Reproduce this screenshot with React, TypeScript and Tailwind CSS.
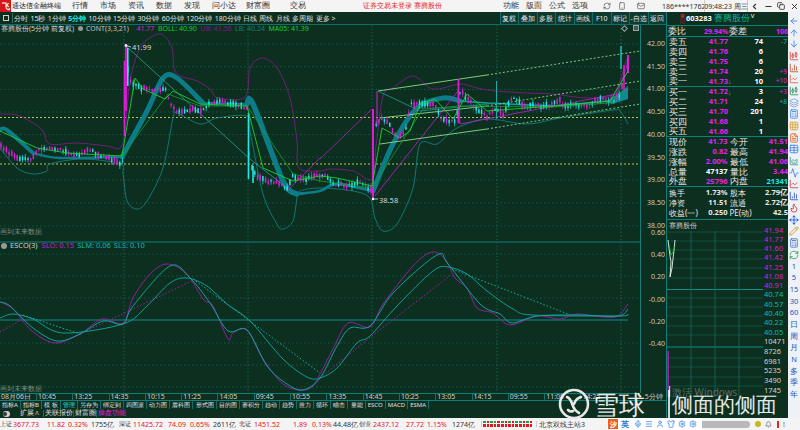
import React from "react";
import { ArrowLeft, ArrowUp, ArrowDown, CandlestickChart, BarChart3, LineChart, Layers, Grid3x3, FileText, Table, Activity, AreaChart, Flame, Move, Pencil, Calculator, RefreshCw, Bell, Smartphone, Mail, Minus, Copy, X, ChevronLeft, Menu, User, Shirt, Settings, Mic } from "lucide-react";

type P = [number, number];
const poly = (p: P[]) => p.map((a) => a.join(",")).join(" ");
const smooth = (p: P[]) => {
  let d = `M${p[0][0]} ${p[0][1]}`;
  for (let i = 0; i < p.length - 1; i++) {
    const a = p[Math.max(i - 1, 0)], b = p[i], c = p[i + 1], e = p[Math.min(i + 2, p.length - 1)];
    const k = 0.16;
    d += ` C${(b[0] + (c[0] - a[0]) * k).toFixed(1)} ${(b[1] + (c[1] - a[1]) * k).toFixed(1)} ${(c[0] - (e[0] - b[0]) * k).toFixed(1)} ${(c[1] - (e[1] - b[1]) * k).toFixed(1)} ${c[0]} ${c[1]}`;
  }
  return d;
};

const center: P[] = [[0,143],[7,150],[20,157],[33,157],[38,147],[60,148],[77,155],[87,148],[100,154],[120,162],[124,160],[126,60],[130,80],[140,87],[153,90],[165,88],[173,107],[177,110],[192,108],[200,110],[210,102],[220,100],[240,105],[247,107],[250,163],[257,177],[267,180],[283,183],[287,188],[293,175],[307,178],[323,173],[333,183],[353,185],[360,180],[372,190],[374,160],[376,123],[382,117],[390,125],[398,137],[407,127],[410,103],[435,103],[440,117],[457,122],[458,90],[463,93],[477,108],[487,115],[497,107],[503,113],[513,97],[523,105],[547,105],[560,100],[565,107],[573,102],[587,105],[600,98],[613,100],[620,93],[628,62]];
const at = (x: number) => {
  for (let i = 0; i < center.length - 1; i++) {
    const [a, b] = center[i], [c, d] = center[i + 1];
    if (x >= a && x <= c) return b + ((d - b) * (x - a)) / (c - a || 1);
  }
  return 100;
};
let seed = 37;
const rnd = () => { seed = (seed * 9301 + 49297) % 233280; return seed / 233280; };
const candles: { x: number; t: number; b: number; h: number; l: number; up: boolean }[] = [];
for (let x = 1; x < 629; x += 2.7) {
  const c = at(x);
  const s = 1 + rnd() * 5;
  const t = c - s / 2 + (rnd() - 0.5) * 3;
  const up = rnd() > 0.5;
  candles.push({ x, t, b: t + s, h: t - rnd() * 3.5, l: t + s + rnd() * 3.5, up });
}
const tall = [
  { x: 124.5, y1: 60, y2: 135, c: "#d81fd8", w: 1.6 }, { x: 126, y1: 44, y2: 110, c: "#d81fd8", w: 1.8 }, { x: 127.8, y1: 47, y2: 85, c: "#22e6e6", w: 1.6 },
  { x: 248.5, y1: 112, y2: 178, c: "#22e6e6", w: 1.6 }, { x: 253, y1: 165, y2: 182, c: "#22e6e6", w: 1.6 }, { x: 373, y1: 108, y2: 197, c: "#d81fd8", w: 2 }, { x: 377, y1: 90, y2: 125, c: "#d81fd8", w: 1 },
  { x: 458.5, y1: 78, y2: 122, c: "#d81fd8", w: 1.8 }, { x: 496.5, y1: 80, y2: 118, c: "#22a8a8", w: 1 }, { x: 621, y1: 45, y2: 68, c: "#22c8c8", w: 1.4 }, { x: 624, y1: 64, y2: 90, c: "#d81fd8", w: 1.6 }, { x: 628, y1: 54, y2: 72, c: "#d81fd8", w: 2 },
];
const upper: P[] = [[0,113],[17,114],[33,122],[43,130],[50,143],[77,142],[107,145],[120,147],[125,130],[130,80],[140,47],[153,35],[163,34],[172,47],[176,72],[197,80],[210,88],[218,97],[245,96],[250,67],[262,57],[277,67],[290,97],[297,140],[299,167],[320,170],[330,168],[353,170],[372,178],[376,145],[383,95],[393,87],[413,75],[433,88],[460,83],[477,87],[497,90],[527,92],[553,93],[587,97],[613,93],[627,58]];
const lower: P[] = [[0,147],[17,167],[33,173],[47,170],[50,163],[83,158],[120,163],[123,173],[127,200],[137,208],[147,200],[163,167],[173,117],[177,112],[200,123],[217,117],[247,115],[250,130],[263,193],[277,223],[283,228],[293,220],[297,197],[300,190],[320,187],[353,190],[370,197],[375,217],[383,230],[397,223],[413,187],[420,143],[437,143],[457,127],[487,118],[527,123],[560,117],[613,109],[620,110],[628,123]];
const bands: { p: P[]; w: number }[] = [
  { p: [[0,129],[7,129],[33,152]], w: 4 },
  { p: [[33,152],[60,157],[122,156]], w: 2.4 },
  { p: [[122,156],[147,110],[163,77],[177,77],[203,102]], w: 5 },
  { p: [[203,102],[247,103]], w: 2 },
  { p: [[247,103],[253,103],[283,180],[297,193]], w: 5.4 },
  { p: [[297,193],[320,190],[337,183],[373,190]], w: 2.8 },
  { p: [[373,190],[393,143],[417,107],[443,97],[460,100]], w: 5 },
];
const mid2: P[] = [[460,100],[487,102],[553,105],[610,100]];
const g1: P[] = [[0,130],[37,147],[67,152],[122,155],[135,77],[143,88],[165,98],[173,90],[200,103],[247,105],[263,167],[293,180],[320,175],[337,177],[372,185],[382,127],[400,137],[410,130],[420,103],[435,98],[453,118],[467,93],[487,110],[553,105],[610,100],[628,70]];
const g2: P[] = [[122,155],[168,93],[200,105],[247,105],[293,173],[320,180],[372,187],[423,108],[460,105],[553,106],[610,102],[628,85]];
const slo: P[] = [[0,301],[13,308],[32,330],[55,342],[80,333],[102,318],[123,322],[133,297],[150,273],[167,263],[187,273],[203,298],[213,305],[228,338],[233,332],[247,329],[263,358],[283,383],[302,389],[313,385],[320,373],[333,348],[348,322],[370,326],[383,303],[413,265],[432,251],[445,258],[455,277],[467,287],[477,307],[493,312],[510,324],[537,315],[560,318],[577,313],[603,316],[618,315],[628,303]];
const slm: P[] = [[0,301],[10,305],[33,327],[57,340],[80,333],[103,320],[123,323],[133,305],[170,265],[190,277],[210,302],[228,330],[247,329],[267,365],[287,383],[303,389],[320,377],[337,345],[350,327],[370,325],[393,292],[437,254],[448,263],[480,303],[500,313],[512,322],[537,315],[577,314],[618,315],[628,308]];
const sls: P[] = [[0,317],[13,313],[33,318],[63,332],[123,323],[147,305],[170,282],[187,277],[207,285],[227,303],[250,320],[283,358],[307,376],[320,377],[337,367],[357,342],[370,335],[397,305],[433,270],[448,266],[467,273],[487,290],[513,308],[533,314],[618,315],[628,313]];

const prices = ["42.00","41.50","41.00","40.50","40.00","39.50","39.00","38.50","38.00"];
const esco = ["0.60","0.40","0.20","-0.00","-0.20","-0.40"];
const times = ["10:45","13:25","14:35","10:15","11:25","14:05","09:45","10:55","13:35","14:45","10:25","13:05","14:15","09:55","11:05","14:25"];
const periods = ["分时","15秒","1分钟","5分钟","10分钟","15分钟","30分钟","60分钟","120分钟","180分钟","日线","周线","月线","多周期","更多 >"];
const tools = ["复权","叠加","多股","统计","画线","F10","标记","-自选","返回"];
const tabs = ["指标A","指标B","模 板","管理","另存为","绑定到","四图派","动力图","盾科图","形式图","目的图","赛积分","趋动","趋势","推力","循环","瞄击","量能","ESCO","MACD","ESMA"];
const menus = [["行情","w-[28px]"],["市场","w-[28px]"],["资讯","w-[28px]"],["数据","w-[28px]"],["发现","w-[28px]"],["问小达","w-[34px]"],["财富圈","w-[44px]"],["交易","w-[28px]"]];
const book = [
  ["卖五","41.77","74","-7"],["卖四","41.76","6",""],["卖三","41.75","6",""],["卖二","41.74","20","+9"],["卖一","41.73","10","+10"],
  ["买一","41.72","3","+3"],["买二","41.71","24","+8"],["买三","41.70","201",""],["买四","41.68","1",""],["买五","41.66","1",""],
];
const stats = [
  ["现价","41.73","今开","41.51","text-[#e81fe8]","text-[#e81fe8]"],["涨跌","0.82","最高","41.94","text-[#e81fe8]","text-[#e81fe8]"],["涨幅","2.00%","最低","41.06","text-[#e81fe8]","text-[#e81fe8]"],
  ["总量","47137","量比","3.44","text-white","text-[#e81fe8]"],["外盘","25796","内盘","21341","text-[#e81fe8]","text-[#22e6e6]"],
];
const stats2 = [["换手","1.73%","股本","2.79亿"],["净资","11.51","流通","2.72亿"],["收益(一)","0.250","PE(动)","42.5"]];
const miniP = ["41.94","41.77","41.60","41.42","41.25","41.08","40.91"];
const miniT = ["40.74","40.57","40.40","40.22","40.05"];
const miniV = ["10471","8726","6981","5235","3490","1745"];
const sideIcons = [
  [ArrowLeft,"#3b82e6"],[ArrowUp,"#3b82e6"],[ArrowDown,"#3b82e6"],[CandlestickChart,"#d9463a"],[BarChart3,"#c0522e"],[LineChart,"#e25d3a"],[CandlestickChart,"#2e8b57"],[Layers,"#7aa0d8"],[Calculator,"#3b82e6"],[Grid3x3,"#e0a030"],[FileText,"#e05a20"],[Table,"#3b82e6"],[AreaChart,"#3a9a8a"],[Activity,"#3b82e6"],[LineChart,"#d04040"],[BarChart3,"#3050d0"],[Flame,"#c03030"],[Move,"#1050d0"],[Pencil,"#e09020"],[Calculator,"#4070c0"],[RefreshCw,"#30a050"],
] as const;
const sideText = ["1","5","15","30","60","日","周","月","N","多","季","年"];
const statusCells: [string, string, string][] = [
  ["上证","w-[13px] text-[6px]","text-[#333]"],["3677.73","w-[34px]","text-[#e8141c]"],["11.82","w-[21px]","text-[#e8141c]"],["0.32%","w-[23px]","text-[#e8141c]"],["1755亿","w-[28px]","text-[#333]"],
  ["深证","w-[14px] text-[6px]","text-[#333]"],["11425.72","w-[35px]","text-[#e8141c]"],["74.09","w-[22px]","text-[#e8141c]"],["0.65%","w-[23px]","text-[#e8141c]"],["2611亿","w-[26px]","text-[#333]"],
  ["北证","w-[15px] text-[6px]","text-[#333]"],["1451.52","w-[39px]","text-[#e8141c]"],["1.89","w-[19px]","text-[#e8141c]"],["0.13%","w-[21px]","text-[#e8141c]"],["44.48亿","w-[26px]","text-[#333]"],
  ["创业","w-[14px] text-[6px]","text-[#333]"],["2437.12","w-[33px]","text-[#e8141c]"],["27.72","w-[21px]","text-[#e8141c]"],["1.15%","w-[25px]","text-[#e8141c]"],["1274亿","w-[29px]","text-[#333]"],
];
const barsTop = ["#20a040","#e8141c","#20a040","#20a040","#e8141c","#20a040","#e8141c"];

function Chart() {
  const hs = [43,65.7,88.5,111,133.5,156,179,202,225];
  const hs2 = [253,275,297,342,364,386];
  return (
    <svg width={640} height={369} viewBox="0 24 640 369" className="block">
      {hs.map((y) => <line key={y} x1={0} x2={640} y1={y} y2={y} stroke="#1c6a5c" strokeWidth={0.7} strokeDasharray="1.5 2.5" />)}
      {hs2.map((y) => <line key={y} x1={0} x2={640} y1={y} y2={y} stroke="#1c6a5c" strokeWidth={0.7} strokeDasharray="1.5 2.5" />)}
      {[124,248,372,497,621].map((x) => <line key={x} x1={x} x2={x} y1={24} y2={393} stroke="#1c6a5c" strokeWidth={0.8} strokeDasharray="1.5 2" />)}
      <line x1={0} x2={640} y1={241} y2={241} stroke="#0f7f7c" />
      <line x1={0} x2={628} y1={319} y2={319} stroke="#0f8f8c" />
      <line x1={0} x2={640} y1={392.5} y2={392.5} stroke="#0f7f7c" />
      <line x1={0} x2={640} y1={116.5} y2={116.5} stroke="#c8d860" strokeWidth={0.9} strokeDasharray="2 2" />
      <line x1={0} x2={640} y1={163} y2={163} stroke="#c8d860" strokeWidth={0.9} strokeDasharray="2 2" />
      <path d={smooth(upper)} fill="none" stroke="#7d1c82" strokeWidth={0.9} />
      <path d={smooth(lower)} fill="none" stroke="#127f7c" strokeWidth={0.9} />
      {bands.map((b, i) => <path key={i} d={smooth(b.p)} fill="none" stroke="#0c7c88" strokeWidth={b.w} strokeLinecap="round" />)}
      <polyline points={poly(mid2)} fill="none" stroke="#12a0a0" strokeWidth={1.6} />
      <polygon points="605,101 628,86 628,98 612,103" fill="#0c8c90" />
      <polyline points="126,45 250,158 287,187" fill="none" stroke="#2aa098" strokeWidth={0.8} />
      <polyline points="378,90 420,110 497,102" fill="none" stroke="#1f8f88" strokeWidth={0.9} />
      <polyline points="320,158 372,108" fill="none" stroke="#a020a8" strokeWidth={0.9} />
      <polyline points="287,190 320,157" fill="none" stroke="#a020a8" strokeWidth={0.9} />
      <polyline points="375,195 458,90 460,123 617,93 628,62" fill="none" stroke="#b020b8" strokeWidth={0.9} />
      <line x1={378} y1={90} x2={487} y2={74} stroke="#8fd88a" strokeWidth={0.9} />
      <line x1={487} y1={74} x2={640} y2={50} stroke="#8fd88a" strokeWidth={0.9} strokeDasharray="2 2" />
      <line x1={380} y1={117} x2={487} y2={105} stroke="#8fd88a" strokeWidth={0.9} />
      <line x1={487} y1={105} x2={640} y2={80} stroke="#8fd88a" strokeWidth={0.9} strokeDasharray="2 2" />
      <line x1={380} y1={143} x2={487} y2={128} stroke="#8fd88a" strokeWidth={0.9} />
      <line x1={487} y1={128} x2={640} y2={103} stroke="#8fd88a" strokeWidth={0.9} strokeDasharray="2 2" />
      {candles.map((c, i) => (
        <g key={i} stroke={c.up ? "#d81fd8" : "#22e6e6"}>
          <line x1={c.x} x2={c.x} y1={c.h} y2={c.l} strokeWidth={0.7} />
          <rect x={c.x - 0.7} y={c.t} width={1.4} height={c.b - c.t} fill={c.up ? "#d81fd8" : "#22e6e6"} strokeWidth={0} />
        </g>
      ))}
      {tall.map((t, i) => <line key={i} x1={t.x} x2={t.x} y1={t.y1} y2={t.y2} stroke={t.c} strokeWidth={t.w} />)}
      <polyline points={poly(g2)} fill="none" stroke="#12a030" strokeWidth={0.8} />
      <polyline points={poly(g1)} fill="none" stroke="#18d030" strokeWidth={0.9} />
      <polyline points="126,44.5 131,46" fill="none" stroke="#e8e8e8" strokeWidth={0.8} />
      <circle cx={126} cy={44.5} r={1.4} fill="#e8e8e8" />
      <text x={132} y={48.5} fontSize={7.5} fill="#d8d8d8">41.99</text>
      <polyline points="373,198 378,198" fill="none" stroke="#e8e8e8" strokeWidth={0.8} />
      <circle cx={373} cy={198} r={1.2} fill="#fff" />
      <text x={379} y={201.5} fontSize={7.5} fill="#d8d8d8">38.58</text>
      <text x={0} y={233} fontSize={6.5} fill="#7d8d85">画到未来数据</text>
      <text x={0} y={390} fontSize={6.5} fill="#7d8d85">画到未来数据</text>
      <polyline points="0,331 23,318" fill="none" stroke="#a020a8" strokeWidth={1} strokeDasharray="1.5 2" />
      <polyline points="23,314 80,333" fill="none" stroke="#12b0a8" strokeWidth={1} strokeDasharray="1.5 2" />
      <polyline points="80,333 192,280" fill="none" stroke="#a020a8" strokeWidth={1} strokeDasharray="1.5 2" />
      <polyline points="193,278 320,372" fill="none" stroke="#12b0a8" strokeWidth={1} strokeDasharray="1.5 2" />
      <polyline points="320,377 372,335 452,273" fill="none" stroke="#a020a8" strokeWidth={1} strokeDasharray="1.5 2" />
      <polyline points="452,268 573,315" fill="none" stroke="#12b0a8" strokeWidth={1} strokeDasharray="1.5 2" />
      <path d={smooth(sls)} fill="none" stroke="#10a8a0" strokeWidth={0.9} />
      <path d={smooth(slo)} fill="none" stroke="#a21caf" strokeWidth={0.9} />
      <path d={smooth(slm)} fill="none" stroke="#10b0a6" strokeWidth={0.9} />
    </svg>
  );
}

function MiniChart() {
  return (
    <svg width={96} height={166} viewBox="666 231 96 166" className="block">
      {[232,241,250,259,268,278,298,307,316,326,335,358,367,377,386].map((y) => <line key={y} x1={666} x2={762} y1={y} y2={y} stroke="#135c50" strokeWidth={0.7} />)}
      <line x1={666} x2={762} y1={289.5} y2={289.5} stroke="#0f8f8c" />
      <line x1={666} x2={762} y1={347} y2={347} stroke="#0f8f8c" />
      {[690,714,738].map((x) => <line key={x} x1={x} x2={x} y1={231} y2={397} stroke="#146a5c" strokeWidth={0.8} />)}
      <polyline points="667,240 669,256 670,262 669,277 671,268 673,250 674,240" fill="none" stroke="#e8f8e8" strokeWidth={0.9} />
      <polyline points="668,245 670,255 672,252 674,246" fill="none" stroke="#30c040" strokeWidth={0.8} />
      <rect x={666.5} y={351} width={1.2} height={46} fill="#d81fd8" />
      <rect x={668} y={386} width={1.2} height={11} fill="#c8c8d8" />
    </svg>
  );
}

export default function App() {
  return (
    <div className="relative flex h-[430px] w-[800px] flex-col overflow-hidden bg-[#0c2f20] font-['Liberation_Sans','Noto_Sans_CJK_SC',sans-serif] text-[8px] leading-none text-[#e8e8e8]">
      {/* title bar */}
      <div className="flex h-[12px] shrink-0 items-center whitespace-nowrap bg-[#f4f4f4] text-[7.5px] text-[#333]">
        <div className="flex h-[12px] w-[11px] shrink-0 items-center justify-center bg-[#d8141c] text-[8px] font-bold text-white">飞</div>
        <span className="ml-[1px] w-[60px] shrink-0 text-[6.5px] text-[#222]">通达信金融终端</span>
        {menus.map(([m, w]) => <span key={m} className={`${w} shrink-0`}>{m}</span>)}
        <span className="ml-[45px] w-[140px] shrink-0 text-[6.8px] text-[#e8141c]">证券交易未登录 赛腾股份</span>
        {["功能","版面","公式","选项"].map((m) => <span key={m} className="w-[23px] shrink-0">{m}</span>)}
        <RefreshCw size={8} className="ml-[8px] shrink-0 text-[#555]" />
        <Smartphone size={8} className="ml-[7px] shrink-0 text-[#555]" />
        <Mail size={8} className="ml-[11px] shrink-0 text-[#555]" />
        <span className="ml-[17px] w-[40px] shrink-0 text-[7px]">186****1762</span>
        <span className="ml-[2px] flex h-[12px] w-[44px] shrink-0 items-center justify-center border-x border-[#ccc] text-[7px]">09:48:23 周三</span>
        <div className="ml-auto flex w-[50px] shrink-0 items-center justify-between pr-[1px]">
          <ChevronLeft size={9} strokeWidth={3} />
          <Minus size={9} strokeWidth={3} />
          <Copy size={8} strokeWidth={2.5} />
          <X size={9} strokeWidth={2.5} />
        </div>
      </div>
      <div className="flex min-h-0 flex-1">
        <div className="flex min-w-0 flex-1">
          {/* chart column */}
          <div className="flex w-[666px] shrink-0 flex-col">
            <div className="flex h-[12px] shrink-0 items-center">
              <div className="ml-[3px] h-[6px] w-[6px] border border-[#cfcfcf]" />
              <div className="ml-[3px] h-[10px] w-px bg-[#3a6a5a]" />
              <div className="ml-[1px] flex flex-1 items-center gap-[2.4px] whitespace-nowrap text-[7px] text-[#e0e0e0]">
                {periods.map((p) => <span key={p} className={p === "5分钟" ? "font-bold text-[#22e6e6]" : ""}>{p}</span>)}
              </div>
              <div className="flex h-[12px] items-stretch">
                {tools.map((t) => <span key={t} className="flex w-[18.5px] items-center justify-center border-l border-[#0f6f6c] bg-[#0f3a30] text-[7px] whitespace-nowrap">{t}</span>)}
              </div>
            </div>
            <div className="relative flex h-[369px] shrink-0 border-t border-[#0f6f6c]">
              <div className="w-[640px] shrink-0"><Chart /></div>
              <div className="flex w-[26px] flex-col border-l border-[#0f7f7c] pt-[7px] text-right text-[7px] text-[#c8c8c8]">
                <div className="flex h-[182px] flex-col">
                  {prices.map((p) => <span key={p} className="flex h-[22.75px] shrink-0 items-center justify-end pr-[1px]">{p}</span>)}
                </div>
                <div className="mt-[7px] flex flex-col">
                  {esco.map((p) => <span key={p} className="flex h-[22.3px] shrink-0 items-center justify-end pr-[1px]">{p}</span>)}
                </div>
              </div>
              <div className="absolute left-[1px] top-[-1px] flex h-[8px] items-center gap-[3.5px] whitespace-nowrap text-[7px]">
                <span className="text-[#d8d8d8]">赛腾股份(5分钟 前复权)</span>
                <span className="h-[5px] w-[5px] rounded-full bg-[#999]" />
                <span className="text-[#c8c8c8]">CONT(3,3,21)</span>
                <span className="ml-[4px] text-[#d81fd8]">41.77</span>
                <span className="text-[#18d030]">BOLL: 40.90</span>
                <span className="text-[#7d1c82]">UB: 41.56</span>
                <span className="text-[#127f7c]">LB: 40.24</span>
                <span className="text-[#18d030]">MA05: 41.39</span>
              </div>
              <div className="absolute left-[622px] top-[0px] flex items-center gap-[6px] text-[7px] text-[#a8a8a8]">
                <span className="h-[5px] w-[5px] rotate-45 border border-[#a0a0a0]" />
                <span className="h-[6px] w-[6px] border border-[#a0a0a0] bg-[#405a50]" />
              </div>
              <div className="absolute left-[1px] top-[217px] flex items-center gap-[3px] whitespace-nowrap text-[7.5px]">
                <span className="h-[6px] w-[6px] rounded-full bg-[#999]" />
                <span className="text-[#d0d0d0]">ESCO(3)</span>
                <span className="ml-[1px] text-[#c020c8]">SLO: 0.15</span>
                <span className="text-[#14b8ae]">SLM: 0.06</span>
                <span className="text-[#14b8ae]">SLS: 0.10</span>
              </div>
            </div>
            <div className="flex h-[7px] shrink-0 items-center whitespace-nowrap text-[7px] text-[#d0d0d0]">
              <span className="w-[36px] shrink-0 pl-[1px]">08月06日</span>
              {times.map((t, i) => <span key={i} className="w-[36.3px] shrink-0 border-l border-[#0f6f6c] pl-[1px]">{t}</span>)}
              <span className="ml-[28px] shrink-0 text-[#c8c8c8]">5分钟</span>
            </div>
            <div className="flex h-[9px] shrink-0 items-center border-t border-[#0f7f7c] whitespace-nowrap text-[6px]">
              {tabs.map((t) => (
                <span key={t} className={`flex h-[8px] items-center justify-center border-r border-[#0f6f6c] px-[2.07px] ${t === "管理" ? "text-[#22e6e6]" : "text-[#e0e0e0]"}`}>{t}</span>
              ))}
            </div>
            <div className="flex h-[9px] shrink-0 items-center whitespace-nowrap text-[6.5px]">
              <span className="ml-[3px] flex h-[6px] w-[7px] items-center rounded-full bg-[#d0d0d0]"><span className="h-[4px] w-[4px] rounded-full bg-[#333]" /></span>
              <span className="ml-[10px] w-[24px] border-r border-[#0f6f6c] text-[#e0e0e0]">扩展∧</span>
              <span className="ml-[1px] w-[29px] border-r border-[#0f6f6c] text-[#e0e0e0]">关联报价</span>
              <span className="ml-[1px] w-[22px] border-r border-[#0f6f6c] text-[#e0e0e0]">财富圈</span>
              <span className="ml-[1px] text-[#e81fe8]">操盘功能</span>
            </div>
          </div>
          {/* quote panel */}
          <div className="flex w-[122px] shrink-0 flex-col border-l border-[#0f7f7c]">
            <div className="flex h-[14px] shrink-0 items-center border-b border-[#0f7f7c] pl-[13px] whitespace-nowrap">
              <span className="mr-[1px] flex h-[10px] w-[5px] flex-col items-center bg-[#40261c] text-[5px] text-[#e84040]">R</span>
              <span className="text-[7.5px] font-bold text-white">603283</span>
              <span className="ml-[2px] text-[8.5px] text-[#14b8a0]">赛腾股份</span>
              <span className="-mt-[6px] ml-[1px] text-[6px] text-white">V</span>
            </div>
            <div className="flex h-[11px] shrink-0 items-center border-b border-[#0f7f7c] pl-[1px] text-[8.5px]">
              <span className="w-[36px]">委比</span>
              <span className="w-[24px] text-right text-[7px] font-bold text-[#e81fe8]">29.94%</span>
              <span className="ml-[1px] w-[30px]">委差</span>
              <span className="w-[29px] text-right text-[7px] font-bold text-[#e81fe8]">106</span>
            </div>
            {book.map(([a, p, v, d], i) => (
              <div key={a} className={`flex h-[10px] shrink-0 items-center pl-[2px] ${i === 4 || i === 9 ? "border-b border-[#0f7f7c]" : ""}`}>
                <span className="w-[30px] text-[8.5px]">{a}</span>
                <span className="w-[29px] text-right text-[7.5px] font-bold text-[#e81fe8]">{p}</span>
                {i === 4 || i === 5 ? <span className="w-[5px] text-[7px] text-[#18d030]">↓</span> : <span className="w-[5px]" />}
                <span className="w-[30px] text-right text-[7.5px] font-bold text-white">{v}</span>
                <span className={`w-[24px] text-right text-[6.5px] ${d.startsWith("-") ? "text-[#14b8ae]" : d === "+8" ? "text-[#14b8ae]" : "text-[#e81fe8]"}`}>{d}</span>
              </div>
            ))}
            {stats.map(([a, b, c, d, e, f], i) => (
              <div key={a} className={`flex h-[10px] shrink-0 items-center pl-[2px] ${i === 4 ? "border-b border-[#0f7f7c]" : ""}`}>
                <span className="w-[30px] text-[8.5px]">{a}</span>
                <span className={`w-[29px] text-right text-[7.5px] font-bold ${e}`}>{b}</span>
                <span className="ml-[2px] w-[30px] text-[8.5px]">{c}</span>
                <span className={`w-[29px] text-right text-[7.5px] font-bold ${f}`}>{d}</span>
              </div>
            ))}
            <div className="mt-[1px] flex flex-col border-b border-[#0f7f7c] pb-[1px]">
              {stats2.map(([a, b, c, d]) => (
                <div key={a} className="flex h-[10px] shrink-0 items-center pl-[2px] whitespace-nowrap">
                  <span className="w-[30px] text-[8px]">{a}</span>
                  <span className="w-[29px] text-right text-[7.5px] font-bold">{b}</span>
                  <span className="ml-[2px] w-[30px] text-[8px]">{c}</span>
                  <span className="w-[29px] text-right text-[7.5px] font-bold">{d}</span>
                </div>
              ))}
            </div>
            <div className="relative flex min-h-0 flex-1">
              <div className="flex w-[96px] shrink-0 flex-col">
                <span className="h-[11px] pl-[2px] pt-[2px] text-[7px] text-[#d0d0d0]">赛腾股份</span>
                <MiniChart />
              </div>
              <div className="flex flex-col pl-[1px] pt-[6px] text-[7.5px]">
                {miniP.map((p) => <span key={p} className="flex h-[9.2px] items-center text-[#d81fd8]">{p}</span>)}
                {miniT.map((p) => <span key={p} className="flex h-[9.4px] items-center text-[#14b8ae]">{p}</span>)}
                {miniV.map((p) => <span key={p} className="flex h-[9.7px] items-center text-[#d0d0d0]">{p}</span>)}
              </div>
            </div>
          </div>
        </div>
        {/* side tool strip */}
        <div className="flex w-[12px] shrink-0 flex-col items-center bg-[#eef1f6] pt-[3px] text-[7.5px] text-[#2458c0]">
          {sideIcons.map(([I, c], i) => (
            <span key={i} className="flex h-[11.7px] shrink-0 items-center justify-center"><I size={10} color={c} strokeWidth={2} /></span>
          ))}
          {sideText.map((t) => <span key={t} className="flex h-[11.7px] shrink-0 items-center justify-center">{t}</span>)}
        </div>
      </div>
      {/* status bar */}
      <div className="flex h-[12px] shrink-0 items-center whitespace-nowrap bg-[#f4f4f4] text-[7px]">
        {statusCells.map(([t, w, c], i) => <span key={i} className={`${w} shrink-0 ${c}`}>{t}</span>)}
        <span className="flex w-[56px] shrink-0 gap-[1px] border-x border-[#ccc] px-[1px]">
          {barsTop.concat(barsTop).map((c, i) => (
            <span key={i} className="flex w-[2.6px] shrink-0 flex-col gap-[1px]">
              <span className="h-[2px]" style={{ background: c }} />
              <span className="h-[3px] bg-[#e8141c]" />
            </span>
          ))}
        </span>
        <span className="ml-[2px] w-[68px] shrink-0 text-[#333]">北京双线主站3</span>
        <span className="flex h-[12px] w-[95px] shrink-0 items-center gap-[3px] bg-white pl-[1px] text-[8px] font-bold text-[#1f7ae0]">
          <span className="flex h-[10px] w-[10px] items-center justify-center bg-[#f06020] text-[7px] text-white">汐</span>
          <span className="w-[10px]">英</span>
          <Mic size={8} /><Menu size={8} /><User size={8} /><Shirt size={8} /><Settings size={8} /><Settings size={8} />
        </span>
        <span className="h-[7px] w-[48px] shrink-0 rounded-r-full bg-[#b8b8b8]" />
        <span className="ml-[5px] h-[6px] w-[6px] shrink-0 rounded-full bg-[#c8b820]" />
        <Bell size={7} className="ml-[4px] shrink-0 text-[#555]" />
        <span className="ml-[5px] h-[7px] w-[2px] shrink-0 bg-[#d03020]" />
        <span className="ml-[4px] shrink-0 text-[#555]">!</span>
      </div>
      {/* watermark */}
      <div className="pointer-events-none absolute left-[558px] top-[390px] flex h-[28px] items-center whitespace-nowrap text-white/90">
        <svg width={32} height={32} viewBox="0 0 32 32" className="shrink-0">
          <circle cx={16} cy={16} r={14} fill="none" stroke="#e8e8e8" strokeWidth={2.6} />
          <path d="M9 9 C16 12 12 20 21 25 M23 9 C17 11 17 14 16 16 M10 22 C12 24 13 24 15 23" fill="none" stroke="#e8e8e8" strokeWidth={2.6} strokeLinecap="round" />
        </svg>
        <span className="ml-[3px] text-[26px] font-medium leading-none">雪球</span>
        <span className="ml-[23px] h-[28px] w-[1.5px] bg-white/80" />
        <span className="ml-[2px] text-[21px] font-medium leading-none">侧面的侧面</span>
      </div>
      <span className="pointer-events-none absolute left-[672px] top-[387px] text-[10px] text-white/30">激活 Windows</span>
    </div>
  );
}
